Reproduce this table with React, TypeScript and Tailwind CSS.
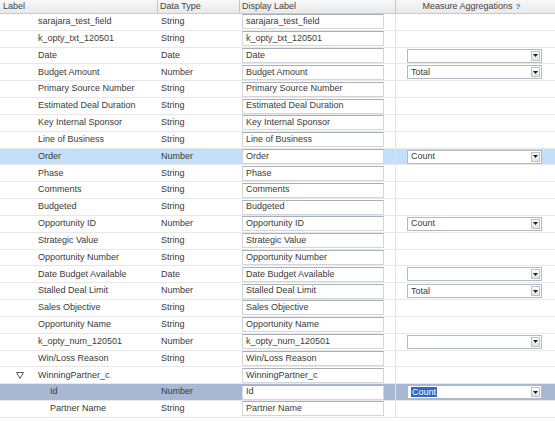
import React from 'react'

interface FieldRow {
  label: string
  type: string
  display: string
  agg?: string
  depth?: number
  expander?: boolean
  state?: 'hover' | 'selected'
}

const ROWS: FieldRow[] = [
  { label: 'sarajara_test_field', type: 'String', display: 'sarajara_test_field' },
  { label: 'k_opty_txt_120501', type: 'String', display: 'k_opty_txt_120501' },
  { label: 'Date', type: 'Date', display: 'Date', agg: '' },
  { label: 'Budget Amount', type: 'Number', display: 'Budget Amount', agg: 'Total' },
  { label: 'Primary Source Number', type: 'String', display: 'Primary Source Number' },
  { label: 'Estimated Deal Duration', type: 'String', display: 'Estimated Deal Duration' },
  { label: 'Key Internal Sponsor', type: 'String', display: 'Key Internal Sponsor' },
  { label: 'Line of Business', type: 'String', display: 'Line of Business' },
  { label: 'Order', type: 'Number', display: 'Order', agg: 'Count', state: 'hover' },
  { label: 'Phase', type: 'String', display: 'Phase' },
  { label: 'Comments', type: 'String', display: 'Comments' },
  { label: 'Budgeted', type: 'String', display: 'Budgeted' },
  { label: 'Opportunity ID', type: 'Number', display: 'Opportunity ID', agg: 'Count' },
  { label: 'Strategic Value', type: 'String', display: 'Strategic Value' },
  { label: 'Opportunity Number', type: 'String', display: 'Opportunity Number' },
  { label: 'Date Budget Available', type: 'Date', display: 'Date Budget Available', agg: '' },
  { label: 'Stalled Deal Limit', type: 'Number', display: 'Stalled Deal Limit', agg: 'Total' },
  { label: 'Sales Objective', type: 'String', display: 'Sales Objective' },
  { label: 'Opportunity Name', type: 'String', display: 'Opportunity Name' },
  { label: 'k_opty_num_120501', type: 'Number', display: 'k_opty_num_120501', agg: '' },
  { label: 'Win/Loss Reason', type: 'String', display: 'Win/Loss Reason' },
  { label: 'WinningPartner_c', type: '', display: 'WinningPartner_c', expander: true },
  { label: 'Id', type: 'Number', display: 'Id', agg: 'Count', depth: 1, state: 'selected' },
  { label: 'Partner Name', type: 'String', display: 'Partner Name', depth: 1 },
]

function Select({ value, selected }: { value: string; selected?: boolean }) {
  return (
    <div className="flex h-[14px] w-[135px] items-center border border-[#b3b9c0] bg-white">
      <div className="flex-1 pl-[3px] leading-none">
        {value && (
          <span className={selected ? 'bg-[#3169c6] px-px text-white' : ''}>{value}</span>
        )}
      </div>
      <div className="mr-px flex h-[10px] w-[9px] items-center justify-center border border-[#bcc2c8] bg-gradient-to-b from-white to-[#dfe3e7]">
        <svg width="5" height="3" viewBox="0 0 5 3">
          <path d="M0 0h5L2.5 3z" fill="#1a1a1a" />
        </svg>
      </div>
    </div>
  )
}

export default function App() {
  return (
    <div
      className="w-[555px] h-[422px] bg-white text-[9px] text-[#3a3a3a]"
      style={{ fontFamily: '"Liberation Sans", Arial, sans-serif' }}
    >
      {/* Header */}
      <div className="flex h-[14px] border-b border-[#c9c9c9] bg-gradient-to-b from-[#f8f8f8] to-[#e9e9e9] text-[#444]">
        <div className="flex w-[158px] items-center border-r border-[#c6c6c6] pl-[3px]">Label</div>
        <div className="flex w-[82px] items-center border-r border-[#c6c6c6] pl-[2px]">Data Type</div>
        <div className="flex w-[156px] items-center border-r border-[#c6c6c6] pl-[2px]">Display Label</div>
        <div className="flex flex-1 items-center justify-center gap-[3px] pr-[8px]">
          Measure Aggregations
          <span className="text-[8px] font-bold text-[#3b79c9]">?</span>
        </div>
      </div>

      {/* Body */}
      {ROWS.map((row, i) => {
        const bg =
          row.state === 'hover'
            ? 'bg-[#c3dff9]'
            : row.state === 'selected'
              ? 'bg-[#a7b7d4]'
              : 'bg-white'
        return (
          <div key={i} className={`flex h-[16.84px] items-center border-b border-[#e8e8e8] ${bg}`}>
            <div className="flex w-[158px] items-center">
              {row.expander ? (
                <>
                  <svg width="8" height="7" viewBox="0 0 8 7" className="ml-[16px] mr-[14px]">
                    <path d="M0.5 0.5h7L4 6.5z" fill="none" stroke="#5a5a5a" strokeWidth="1" />
                  </svg>
                  <span>{row.label}</span>
                </>
              ) : (
                <span className={row.depth ? 'pl-[50px]' : 'pl-[38px]'}>{row.label}</span>
              )}
            </div>
            <div className="w-[82px] pl-[3px]">{row.type}</div>
            <div className="flex w-[156px] items-center self-stretch border-r border-[#e2e2e2]">
              <div className="ml-[2px] flex h-[15px] w-[142px] items-center border border-[#d2d5d9] border-t-[#a9afb6] bg-white pl-[3px]">
                {row.display}
              </div>
            </div>
            <div className="flex flex-1 items-center pl-[11px]">
              {row.agg !== undefined && <Select value={row.agg} selected={row.state === 'selected'} />}
            </div>
          </div>
        )
      })}
    </div>
  )
}
